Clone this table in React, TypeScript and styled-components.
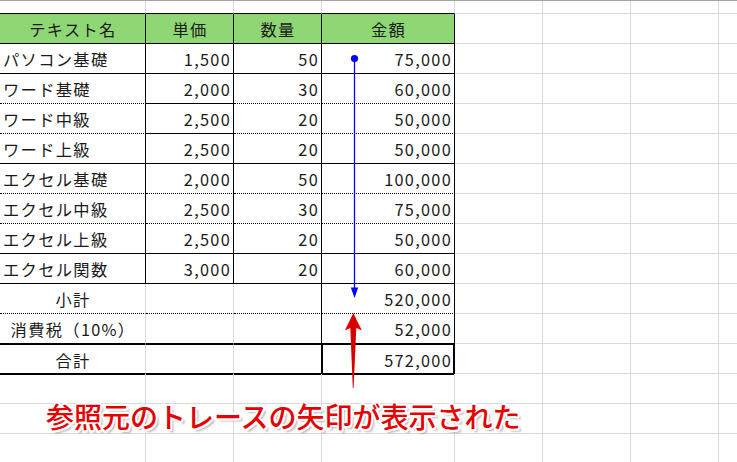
import React from "react";
import styled, { createGlobalStyle, css } from "styled-components";

const Global = createGlobalStyle`
  html, body { margin: 0; padding: 0; background: #ffffff; overflow: hidden; }
  #root { width: 737px; height: 462px; }
`;

const GRID = "#dadada";
const INK = "#000000";

type Line = "grid" | "solid" | "dotted";

const Page = styled.div`
  position: relative;
  width: 737px;
  height: 462px;
  overflow: hidden;
  font-family: "Noto Sans CJK JP", "Noto Sans", sans-serif;
`;

const Sheet = styled.div`
  display: grid;
  grid-template-columns: 146px 88px 88px 133px 88px 88px 88px 88px;
  grid-template-rows: 13px repeat(15, 30px);
  border-top: 1px solid #a3a3a3;
`;

const lineCss = (l: Line) =>
  l === "grid" ? `1px solid ${GRID}` : l === "solid" ? `1px solid ${INK}` : `1px dotted ${INK}`;

const Cell = styled.div<{
  $bottom?: Line;
  $right?: Line;
  $align?: "left" | "right" | "center";
  $head?: boolean;
  $total?: "plain" | "box";
}>`
  box-sizing: border-box;
  border-bottom: ${(p) => lineCss(p.$bottom ?? "grid")};
  border-right: ${(p) => lineCss(p.$right ?? "grid")};
  display: flex;
  align-items: center;
  justify-content: ${(p) =>
    p.$align === "right" ? "flex-end" : p.$align === "center" ? "center" : "flex-start"};
  padding: 2px 2px 0 3px;
  font-size: 16.3px;
  letter-spacing: 1.3px;
  line-height: 1;
  color: #1a1a1a;
  white-space: nowrap;
  background: ${(p) => (p.$head ? "#8fd774" : "transparent")};
  ${(p) =>
    p.$total === "plain" &&
    css`
      border-top: 1px solid ${INK};
      box-shadow: 0 1px 0 ${INK};
    `}
  ${(p) =>
    p.$total === "box" &&
    css`
      border-top: 1px solid ${INK};
      box-shadow: inset 1px 0 0 ${INK}, inset -1px 0 0 ${INK}, 0 1px 0 ${INK};
    `}
`;

const Overlay = styled.svg`
  position: absolute;
  left: 0;
  top: 0;
  width: 737px;
  height: 462px;
  pointer-events: none;
`;

const Note = styled.div`
  position: absolute;
  left: 46px;
  top: 401px;
  font-family: "Noto Sans CJK JP", "Noto Sans", sans-serif;
  font-size: 28px;
  line-height: 30px;
  font-weight: 500;
  color: #e60000;
  white-space: nowrap;
  text-shadow:
    -2px 0 0 #fff, 2px 0 0 #fff, 0 -2px 0 #fff, 0 2px 0 #fff,
    -1.5px -1.5px 0 #fff, 1.5px -1.5px 0 #fff, -1.5px 1.5px 0 #fff, 1.5px 1.5px 0 #fff,
    3px 3px 2px rgba(120, 120, 120, 0.55);
`;

type Item = { name: string; price: string; qty: string; amount: string; line: Line; bLine: Line };

const items: Item[] = [
  { name: "パソコン基礎", price: "1,500", qty: "50", amount: "75,000", line: "solid", bLine: "solid" },
  { name: "ワード基礎", price: "2,000", qty: "30", amount: "60,000", line: "dotted", bLine: "solid" },
  { name: "ワード中級", price: "2,500", qty: "20", amount: "50,000", line: "dotted", bLine: "solid" },
  { name: "ワード上級", price: "2,500", qty: "20", amount: "50,000", line: "solid", bLine: "solid" },
  { name: "エクセル基礎", price: "2,000", qty: "50", amount: "100,000", line: "dotted", bLine: "dotted" },
  { name: "エクセル中級", price: "2,500", qty: "30", amount: "75,000", line: "dotted", bLine: "dotted" },
  { name: "エクセル上級", price: "2,500", qty: "20", amount: "50,000", line: "solid", bLine: "solid" },
  { name: "エクセル関数", price: "3,000", qty: "20", amount: "60,000", line: "solid", bLine: "solid" },
];

const Blanks: React.FC<{ count: number }> = ({ count }) => (
  <>
    {Array.from({ length: count }).map((_, i) => (
      <Cell key={i} />
    ))}
  </>
);

const headers = ["テキスト名", "単価", "数量", "金額"];

export default function App() {
  return (
    <Page>
      <Global />
      <Sheet>
        <Cell $bottom="solid" />
        <Cell $bottom="solid" />
        <Cell $bottom="solid" />
        <Cell $bottom="solid" />
        <Blanks count={4} />

        {headers.map((h) => (
          <Cell key={h} $head $align="center" $bottom="solid" $right="solid">
            {h}
          </Cell>
        ))}
        <Blanks count={4} />

        {items.map((it) => (
          <React.Fragment key={it.name}>
            <Cell $bottom={it.line} $right="solid">{it.name}</Cell>
            <Cell $bottom={it.bLine} $right="solid" $align="right">{it.price}</Cell>
            <Cell $bottom={it.line} $right="solid" $align="right">{it.qty}</Cell>
            <Cell $bottom={it.line} $right="solid" $align="right">{it.amount}</Cell>
            <Blanks count={4} />
          </React.Fragment>
        ))}

        <Cell $bottom="dotted" $align="center">小計</Cell>
        <Cell $bottom="dotted" />
        <Cell $bottom="dotted" $right="solid" />
        <Cell $bottom="dotted" $right="solid" $align="right">520,000</Cell>
        <Blanks count={4} />

        <Cell $bottom="solid" $align="center">消費税（10%）</Cell>
        <Cell $bottom="solid" />
        <Cell $bottom="solid" $right="solid" />
        <Cell $bottom="solid" $right="solid" $align="right">52,000</Cell>
        <Blanks count={4} />

        <Cell $bottom="solid" $total="plain" $align="center">合計</Cell>
        <Cell $bottom="solid" $total="plain" />
        <Cell $bottom="solid" $total="plain" $right="solid" />
        <Cell $bottom="solid" $total="box" $right="solid" $align="right">572,000</Cell>
        <Blanks count={4} />

        <Blanks count={24} />
      </Sheet>

      <Overlay viewBox="0 0 737 462">
        <circle cx="354.5" cy="58.5" r="3.6" fill="#0000ff" />
        <line x1="354.5" y1="58" x2="354.5" y2="290" stroke="#0000ff" strokeWidth="1.3" />
        <polygon points="350.8,287.5 358.2,287.5 354.5,298" fill="#0000ff" />
        <defs>
          <linearGradient id="redArrow" x1="0" y1="0" x2="1" y2="0">
            <stop offset="0" stopColor="#f00000" />
            <stop offset="0.5" stopColor="#d40000" />
            <stop offset="1" stopColor="#f00000" />
          </linearGradient>
        </defs>
        <path
          d="M353.3 313 Q357 321 362 330.5 L356.3 328 L353.6 388 L352.8 388 L350.3 328 L344.8 330.5 Q349.6 321 353.3 313 Z"
          fill="url(#redArrow)"
        />
      </Overlay>

      <Note>参照元のトレースの矢印が表示された</Note>
    </Page>
  );
}
